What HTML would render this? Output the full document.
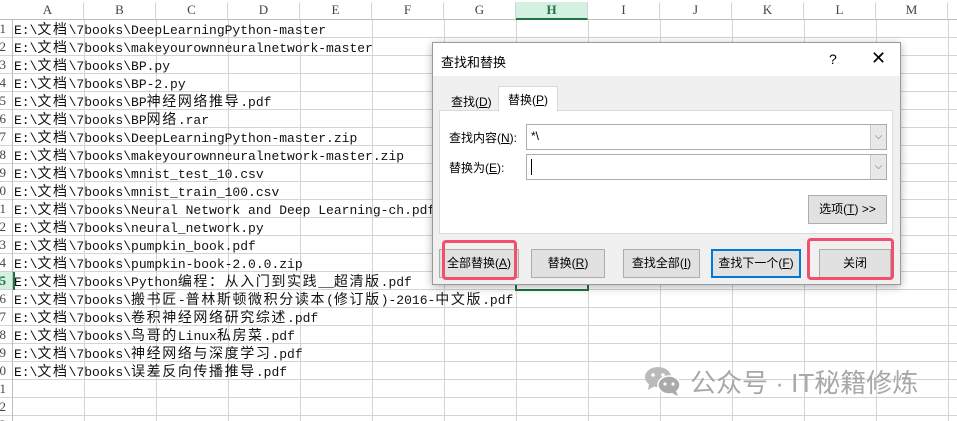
<!DOCTYPE html>
<html><head><meta charset="utf-8"><style>
*{margin:0;padding:0;box-sizing:border-box}
body{width:957px;height:421px;overflow:hidden;background:#fff;position:relative;font-family:"Liberation Mono","Noto Sans CJK SC",monospace}
#grid{position:absolute;left:0;top:0;width:957px;height:421px;
background-image:linear-gradient(to right,#d4d4d4 1px,transparent 1px),linear-gradient(to bottom,#d4d4d4 1px,transparent 1px);
background-size:72px 18px,72px 18px;background-position:12px 20px,0 19px}
#hdr{position:absolute;left:0;top:0;width:957px;height:20px;background:#fff;border-bottom:1px solid #bdbdbd}
#hdr span{position:absolute;top:2px;width:72px;text-align:center;font-size:13px;color:#444;font-family:"Liberation Serif",serif;border-right:1px solid #d4d4d4;height:18px}
#rn{position:absolute;left:0;top:20px;width:13px;height:401px;background:#fff;border-right:1px solid #bdbdbd;overflow:hidden}
#rn div{height:18px;font-size:13px;color:#444;text-align:right;padding-right:6px;line-height:18px;border-bottom:1px solid #d4d4d4;overflow:hidden;font-family:"Liberation Serif",serif;margin-left:-20px}
#cells{position:absolute;left:14px;top:20px}
#cells div{height:18px;line-height:18px;font-size:13px;color:#111;white-space:pre}
#cells i{font-style:normal;font-size:14px;letter-spacing:1.6px;font-family:"Noto Sans CJK SC",sans-serif}
.dlg{position:absolute;left:432px;top:42px;width:469px;height:243px;background:#f0f0f0;border:1px solid #9a9a9a;box-shadow:0 2px 8px rgba(0,0,0,.3);font-family:"Liberation Sans","Noto Sans CJK SC",sans-serif;font-size:12px;color:#000}
.ttl{position:absolute;left:0;top:0;width:467px;height:33px;background:#fff}
.b{position:absolute;background:#e1e1e1;border:1px solid #adadad;text-align:center;font-size:12px}
.in{position:absolute;background:#fff;border:1px solid #adadad;height:26px}
.dd{position:absolute;right:0;top:0;width:16px;height:24px;background:#e8e8e8;border-left:1px solid #ccc;color:#666;font-size:10px;text-align:center;line-height:24px}
.red{position:absolute;border:3px solid #f0506e;border-radius:4px}
u{text-decoration:underline}
</style></head><body>
<div id="grid"></div>
<div id="hdr">
<span style="left:12px">A</span><span style="left:84px">B</span><span style="left:156px">C</span><span style="left:228px">D</span><span style="left:300px">E</span><span style="left:372px">F</span><span style="left:444px">G</span><span style="left:516px;background:#d3f0e0;color:#217346;font-weight:bold;border-bottom:2px solid #217346">H</span><span style="left:588px">I</span><span style="left:660px">J</span><span style="left:732px">K</span><span style="left:804px">L</span><span style="left:876px">M</span>
</div>
<div id="rn"><div>1</div><div>2</div><div>3</div><div>4</div><div>5</div><div>6</div><div>7</div><div>8</div><div>9</div><div>10</div><div>11</div><div>12</div><div>13</div><div>14</div><div style="color:#217346;font-weight:bold;background:#d3f0e0">15</div><div>16</div><div>17</div><div>18</div><div>19</div><div>20</div><div>21</div><div>22</div><div>23</div></div>
<div style="position:absolute;left:13px;top:272px;width:2px;height:18px;background:#217346"></div>
<div style="position:absolute;left:515px;top:271px;width:74px;height:20px;border:2px solid #217346"></div>
<div id="cells">
<div>E:\<i>文档</i>\7books\DeepLearningPython-master</div>
<div>E:\<i>文档</i>\7books\makeyourownneuralnetwork-master</div>
<div>E:\<i>文档</i>\7books\BP.py</div>
<div>E:\<i>文档</i>\7books\BP-2.py</div>
<div>E:\<i>文档</i>\7books\BP<i>神经网络推导</i>.pdf</div>
<div>E:\<i>文档</i>\7books\BP<i>网络</i>.rar</div>
<div>E:\<i>文档</i>\7books\DeepLearningPython-master.zip</div>
<div>E:\<i>文档</i>\7books\makeyourownneuralnetwork-master.zip</div>
<div>E:\<i>文档</i>\7books\mnist_test_10.csv</div>
<div>E:\<i>文档</i>\7books\mnist_train_100.csv</div>
<div>E:\<i>文档</i>\7books\Neural Network and Deep Learning-ch.pdf</div>
<div>E:\<i>文档</i>\7books\neural_network.py</div>
<div>E:\<i>文档</i>\7books\pumpkin_book.pdf</div>
<div>E:\<i>文档</i>\7books\pumpkin-book-2.0.0.zip</div>
<div>E:\<i>文档</i>\7books\Python<i>编程：从入门到实践</i>__<i>超清版</i>.pdf</div>
<div>E:\<i>文档</i>\7books\<i>搬书匠</i>-<i>普林斯顿微积分读本</i>(<i>修订版</i>)-2016-<i>中文版</i>.pdf</div>
<div>E:\<i>文档</i>\7books\<i>卷积神经网络研究综述</i>.pdf</div>
<div>E:\<i>文档</i>\7books\<i>鸟哥的</i>Linux<i>私房菜</i>.pdf</div>
<div>E:\<i>文档</i>\7books\<i>神经网络与深度学习</i>.pdf</div>
<div>E:\<i>文档</i>\7books\<i>误差反向传播推导</i>.pdf</div>
</div>
<div class="dlg">
<div class="ttl"><span style="position:absolute;left:8px;top:9px;font-size:13px">查找和替换</span><span style="position:absolute;left:396px;top:8px;font-size:14px">?</span><span style="position:absolute;left:438px;top:5px;font-size:18px">✕</span></div>
<div style="position:absolute;left:6px;top:67px;width:454px;height:124px;background:#fff;border:1px solid #d9d9d9"></div>
<div style="position:absolute;left:65px;top:43px;width:60px;height:26px;background:#fff;border:1px solid #d9d9d9;border-bottom:none"></div>
<span style="position:absolute;left:18px;top:50px;font-size:12px">查找(<u>D</u>)</span>
<span style="position:absolute;left:75px;top:48px;font-size:12px">替换(<u>P</u>)</span>
<span style="position:absolute;left:16px;top:86px">查找内容(<u>N</u>):</span>
<span style="position:absolute;left:16px;top:116px">替换为(<u>E</u>):</span>
<div class="in" style="left:93px;top:81px;width:361px"><span style="position:absolute;left:4px;top:4px">*\</span><div class="dd">⌵</div></div>
<div class="in" style="left:93px;top:111px;width:361px"><span style="position:absolute;left:4px;top:4px;width:1px;height:16px;background:#000"></span><div class="dd">⌵</div></div>
<div class="b" style="left:375px;top:152px;width:79px;height:29px;line-height:27px">选项(<u>T</u>) &gt;&gt;</div>
<div class="b" style="left:6px;top:206px;width:80px;height:29px;line-height:27px">全部替换(<u>A</u>)</div>
<div class="b" style="left:98px;top:206px;width:74px;height:29px;line-height:27px">替换(<u>R</u>)</div>
<div class="b" style="left:190px;top:206px;width:77px;height:29px;line-height:27px">查找全部(<u>I</u>)</div>
<div class="b" style="left:278px;top:206px;width:90px;height:29px;line-height:25px;border:2px solid #0078d7">查找下一个(<u>F</u>)</div>
<div class="b" style="left:386px;top:206px;width:72px;height:29px;line-height:27px">关闭</div>
</div>
<div class="red" style="left:442px;top:240px;width:75px;height:40px"></div>
<div class="red" style="left:807px;top:238px;width:87px;height:42px"></div>
<svg style="position:absolute;left:644px;top:366px" width="38" height="30" viewBox="0 0 38 30">
<ellipse cx="14" cy="11" rx="13" ry="10" fill="#bbb"/><path d="M5 18 L4 24 L11 20Z" fill="#bbb"/>
<circle cx="9" cy="9" r="1.8" fill="#fff"/><circle cx="19" cy="9" r="1.8" fill="#fff"/>
<ellipse cx="25" cy="19" rx="11" ry="9" fill="#aaa" stroke="#fff" stroke-width="1.5"/><path d="M32 25 L34 30 L28 27Z" fill="#aaa"/>
<circle cx="21" cy="18" r="1.6" fill="#fff"/><circle cx="29" cy="18" r="1.6" fill="#fff"/>
</svg>
<div style="position:absolute;left:690px;top:363px;font-family:'Liberation Sans','Noto Sans CJK SC',sans-serif;font-size:26px;color:#a8a8a8;white-space:nowrap">公众号 · IT秘籍修炼</div>
</body></html>
